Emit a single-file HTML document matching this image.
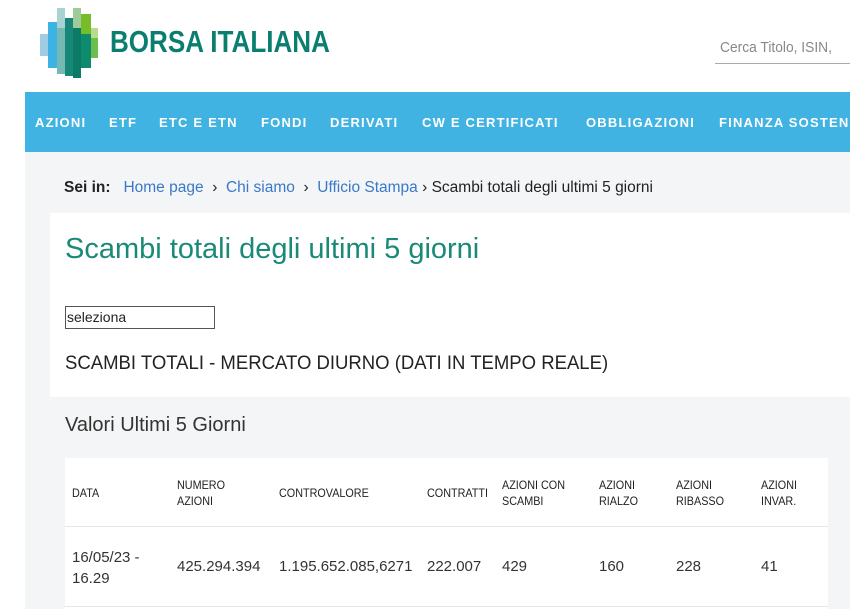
<!DOCTYPE html>
<html><head><meta charset="utf-8"><style>
*{margin:0;padding:0;box-sizing:border-box}
body{width:850px;height:609px;overflow:hidden;background:#fff;font-family:"Liberation Sans",sans-serif;color:#222;position:relative}
.a{position:absolute;white-space:nowrap}
.nav{position:absolute;left:25px;top:92px;width:825px;height:60px;background:#40b3e3;overflow:hidden}
.nav span{position:absolute;top:23px;color:#fff;font-weight:bold;font-size:13px;letter-spacing:1.2px;white-space:nowrap}
.grey{position:absolute;left:25px;top:152px;width:825px;height:457px;background:#f4f5f6}
.th{font-size:12px;color:#222;line-height:16px;transform:scaleX(0.9);transform-origin:left}
.td{font-size:15px;color:#333}
</style></head><body>
<svg class="a" style="left:38px;top:8px" width="62" height="70">
<rect x="2" y="26" width="8" height="22" fill="#9fcbe3"/>
<rect x="10" y="14" width="9" height="46" fill="#3db3e3"/>
<rect x="19" y="20" width="8" height="46" fill="#74b9b3"/>
<rect x="19" y="0" width="8" height="20" fill="#a8d3d2"/>
<rect x="27" y="10" width="8" height="58" fill="#17877a"/>
<rect x="35" y="20" width="8" height="50" fill="#0b7a66"/>
<rect x="35" y="0" width="8" height="20" fill="#9fcb9a"/>
<rect x="43" y="14" width="10" height="46" fill="#0e8a6e"/>
<rect x="43" y="6" width="10" height="20" fill="#77bd2a"/>
<rect x="53" y="28" width="7" height="22" fill="#6cbf4a"/>
<rect x="53" y="20" width="7" height="10" fill="#b9db8c"/>
</svg>
<div class="a" style="left:110px;top:24px;font-size:31px;font-weight:bold;color:#0a7f6f;transform:scaleX(0.84);transform-origin:left">BORSA ITALIANA</div>
<div class="a" style="left:720px;top:39px;font-size:15px;color:#888;transform:scaleX(0.92);transform-origin:left">Cerca Titolo, ISIN,</div>
<div class="a" style="left:715px;top:63px;width:135px;height:1px;background:#aaa"></div>
<div class="nav">
<span style="left:10px">AZIONI</span><span style="left:84px">ETF</span><span style="left:134px">ETC E ETN</span><span style="left:236px">FONDI</span><span style="left:305px">DERIVATI</span><span style="left:397px">CW E CERTIFICATI</span><span style="left:561px">OBBLIGAZIONI</span><span style="left:694px">FINANZA SOSTENIBILE</span>
</div>
<div class="grey"></div>
<div class="a" style="left:64px;top:179px;font-size:15.5px"><b>Sei in:</b>&nbsp;&nbsp; <span style="color:#3a78c9">Home page</span> &nbsp;›&nbsp; <span style="color:#3a78c9">Chi siamo</span> &nbsp;›&nbsp; <span style="color:#3a78c9">Ufficio Stampa</span> › Scambi totali degli ultimi 5 giorni</div>
<div class="a" style="left:50px;top:213px;width:800px;height:184px;background:#fff"></div>
<div class="a" style="left:65px;top:233px;font-size:29px;color:#1a8a78">Scambi totali degli ultimi 5 giorni</div>
<div class="a" style="left:65px;top:306px;width:150px;height:23px;border:1px solid #555;background:#fff;font-size:14px;padding:2px 1px">seleziona</div>
<div class="a" style="left:65px;top:352px;font-size:19.5px;color:#222;transform:scaleX(0.95);transform-origin:left">SCAMBI TOTALI - MERCATO DIURNO (DATI IN TEMPO REALE)</div>
<div class="a" style="left:65px;top:414px;font-size:20px;color:#333">Valori Ultimi 5 Giorni</div>
<div class="a" style="left:65px;top:458px;width:763px;height:151px;background:#fff"></div>
<div class="a" style="left:65px;top:526px;width:763px;height:1px;background:#e6e6e6"></div>
<div class="a" style="left:65px;top:606px;width:763px;height:1px;background:#e6e6e6"></div>
<div class="a th" style="left:72px;top:485px">DATA</div>
<div class="a th" style="left:177px;top:477px">NUMERO<br>AZIONI</div>
<div class="a th" style="left:279px;top:485px">CONTROVALORE</div>
<div class="a th" style="left:427px;top:485px">CONTRATTI</div>
<div class="a th" style="left:502px;top:477px">AZIONI CON<br>SCAMBI</div>
<div class="a th" style="left:599px;top:477px">AZIONI<br>RIALZO</div>
<div class="a th" style="left:676px;top:477px">AZIONI<br>RIBASSO</div>
<div class="a th" style="left:761px;top:477px">AZIONI<br>INVAR.</div>
<div class="a td" style="left:72px;top:547px;line-height:21px">16/05/23 -<br>16.29</div>
<div class="a td" style="left:177px;top:558px">425.294.394</div>
<div class="a td" style="left:279px;top:558px">1.195.652.085,6271</div>
<div class="a td" style="left:427px;top:558px">222.007</div>
<div class="a td" style="left:502px;top:558px">429</div>
<div class="a td" style="left:599px;top:558px">160</div>
<div class="a td" style="left:676px;top:558px">228</div>
<div class="a td" style="left:761px;top:558px">41</div>
</body></html>
